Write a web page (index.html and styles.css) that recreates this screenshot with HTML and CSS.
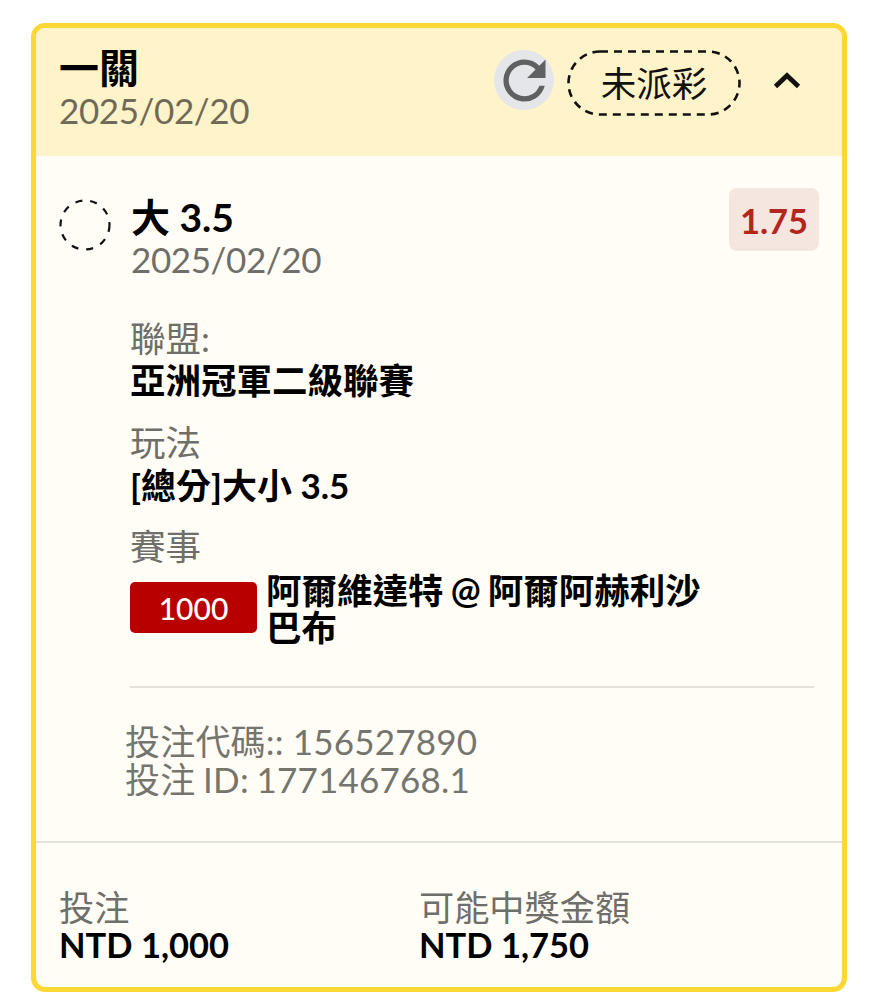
FILE: index.html
```html
<!DOCTYPE html>
<html lang="zh-Hant">
<head>
  <meta charset="UTF-8">
  <meta name="viewport" content="width=device-width, initial-scale=1.0">
  <link rel="stylesheet" href="styles.css">
  <title>一關</title>
</head>
<body>
  <div class="card">
    <div class="card-head">
      <div class="head-text">
        <div class="head-title">一關</div>
        <div class="head-date">2025/02/20</div>
      </div>
      <div class="head-actions">
        <div class="refresh">
          <svg width="63" height="63" viewBox="0 0 24 24"><path fill="#5f6062" d="M17.65 6.35A7.96 7.96 0 0 0 12 4a8 8 0 1 0 7.73 10h-2.08A6 6 0 1 1 12 6c1.66 0 3.14.69 4.22 1.78L13 11h7V4l-2.35 2.35z"/></svg>
        </div>
        <div class="status">
          <svg class="status-frame" width="174" height="66" viewBox="0 0 174 66"><rect x="1.500" y="1.500" width="171" height="63" rx="31.500" fill="none" stroke="#111" stroke-width="2.600" stroke-dasharray="8 6"/></svg>
          未派彩
        </div>
        <svg class="chevron" width="28" height="20" viewBox="0 0 28 20"><path d="M2.500 16.500 L14 5.500 L25.500 16.500" fill="none" stroke="#111" stroke-width="4.800"/></svg>
      </div>
    </div>

    <div class="card-body">
      <div class="pick">
        <svg class="pick-circle" width="52" height="52" viewBox="0 0 52 52"><circle cx="26" cy="26" r="24.500" fill="none" stroke="#111" stroke-width="2.200" stroke-dasharray="7 8"/></svg>
        <div class="pick-main">
          <div class="pick-title">大 3.5</div>
          <div class="pick-date">2025/02/20</div>
        </div>
        <div class="odds">1.75</div>
      </div>

      <div class="details">
        <div class="label">聯盟:</div>
        <div class="value">亞洲冠軍二級聯賽</div>
        <div class="label">玩法</div>
        <div class="value value-rule">[總分]大小 3.5</div>
        <div class="label">賽事</div>
        <div class="match">
          <span class="match-no">1000</span>
          <span class="match-name">阿爾維達特 @ 阿爾阿赫利沙巴布</span>
        </div>
      </div>

      <div class="codes">
        <div>投注代碼:: 156527890</div>
        <div class="code-id">投注 ID: 177146768.1</div>
      </div>
    </div>

    <div class="card-foot">
      <div class="foot-col">
        <div class="foot-label">投注</div>
        <div class="foot-value">NTD 1,000</div>
      </div>
      <div class="foot-col">
        <div class="foot-label">可能中獎金額</div>
        <div class="foot-value">NTD 1,750</div>
      </div>
    </div>
  </div>
</body>
</html>
```

FILE: styles.css
```css
* {
  box-sizing: border-box;
}

body {
  margin: 0;
  padding: 23px 36px 8px 31px;
  background-color: #fff;
  font-family: Lato, 'Noto Sans CJK TC', sans-serif;
}

.card {
  height: 969px;
  border: 5px solid #fdd835;
  border-radius: 14px;
  background-color: #fffdf5;
  overflow: hidden;
}

.card-head {
  display: flex;
  justify-content: space-between;
  height: 128px;
  padding: 18px 23px 0;
  background-color: #fff3c9;
}

.head-title {
  font-size: 40px;
  line-height: 44px;
  font-weight: 700;
  color: #000;
}

.head-date {
  font-size: 35px;
  line-height: 40px;
  letter-spacing: -0.4px;
  color: #6f6a58;
}

.head-actions {
  display: flex;
  align-items: flex-start;
}

.refresh {
  display: flex;
  flex: none;
  align-items: center;
  justify-content: center;
  width: 60px;
  height: 60px;
  margin-top: 4px;
  border-radius: 50%;
  background-color: #e4e6ea;
}

.refresh svg {
  flex: none;
}

.status {
  position: relative;
  width: 174px;
  height: 66px;
  margin: 4px 0 0 13px;
  font-size: 35.500px;
  line-height: 68px;
  text-align: center;
  color: #111;
}

.status-frame {
  position: absolute;
  top: 0;
  left: 0;
}

.chevron {
  margin: 24px 18px 0 32px;
}

.card-body {
  padding: 32px 23px 0;
}

.pick {
  display: flex;
  align-items: flex-start;
}

.pick-circle {
  flex: none;
  margin: 11px 20px 0 0;
}

.pick-main {
  flex: 1;
}

.pick-title {
  margin-top: 8px;
  font-size: 39px;
  line-height: 42px;
  font-weight: 700;
  color: #000;
}

.pick-date {
  font-size: 35px;
  line-height: 42px;
  letter-spacing: -0.4px;
  color: #6e6e6a;
}

.odds {
  width: 90px;
  height: 63px;
  border-radius: 8px;
  background-color: #f5e6df;
  font-size: 34.500px;
  line-height: 66px;
  font-weight: 700;
  text-align: center;
  color: #b3261e;
}

.details {
  margin: 38px 5px 0 71px;
  padding-bottom: 40px;
  border-bottom: 2px solid #e4e2da;
}

.label {
  font-size: 35.500px;
  line-height: 42px;
  color: #6e6e6a;
}

.value {
  margin-bottom: 20px;
  font-size: 35.500px;
  line-height: 42px;
  font-weight: 700;
  color: #000;
}

.value-rule {
  font-size: 35px;
}

.match {
  display: flex;
  align-items: flex-start;
  margin-top: 4px;
}

.match-no {
  flex: none;
  width: 127px;
  height: 51px;
  margin: 10px 9px 0 0;
  border-radius: 5px;
  background-color: #b90000;
  font-size: 30px;
  line-height: 52px;
  font-weight: 500;
  text-align: center;
  color: #fff;
}

.match-name {
  width: 440px;
  font-size: 35.500px;
  line-height: 37px;
  word-spacing: -1.500px;
  font-weight: 700;
  color: #000;
}

.codes {
  margin: 34px 0 0 66px;
  font-size: 35px;
  line-height: 38px;
  letter-spacing: 0.2px;
  color: #757570;
}

.code-id {
  word-spacing: -1.500px;
}

.card-foot {
  display: flex;
  height: 150px;
  margin-top: 43px;
  padding: 46px 23px 0;
  border-top: 2px solid #e4e2da;
}

.foot-col {
  width: 360px;
}

.foot-label {
  font-size: 35.200px;
  line-height: 37px;
  color: #6e6e6a;
}

.foot-value {
  font-size: 34.500px;
  line-height: 37px;
  font-weight: 700;
  color: #000;
}
```
